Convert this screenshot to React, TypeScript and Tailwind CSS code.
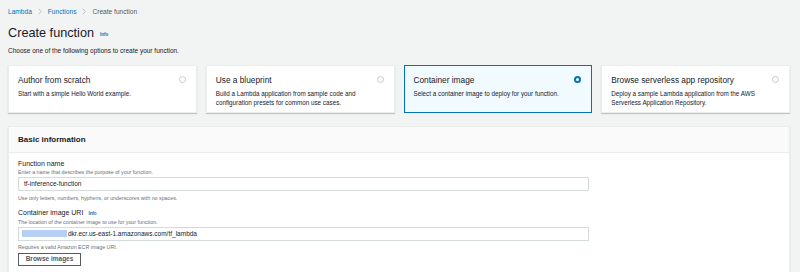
const font = { fontFamily: '"Liberation Sans", Arial, sans-serif' };

type Option = { title: string; desc: string; selected?: boolean };

const options: Option[] = [
  { title: "Author from scratch", desc: "Start with a simple Hello World example." },
  {
    title: "Use a blueprint",
    desc: "Build a Lambda application from sample code and configuration presets for common use cases.",
  },
  {
    title: "Container image",
    desc: "Select a container image to deploy for your function.",
    selected: true,
  },
  {
    title: "Browse serverless app repository",
    desc: "Deploy a sample Lambda application from the AWS Serverless Application Repository.",
  },
];

const Chevron = () => (
  <svg width="4" height="7" viewBox="0 0 4 7" className="shrink-0">
    <path d="M0.7 0.7 L3.3 3.5 L0.7 6.3" fill="none" stroke="#aab7b8" strokeWidth="0.8" />
  </svg>
);

const Radio = ({ on }: { on?: boolean }) =>
  on ? (
    <span className="mt-[1px] block h-[7px] w-[7px] shrink-0 rounded-full border-[2px] border-[#0073bb] bg-white" />
  ) : (
    <span className="mt-[1px] block h-[7px] w-[7px] shrink-0 rounded-full border border-[#c6cccc] bg-white" />
  );

const OptionCard = ({ o }: { o: Option }) => (
  <div
    className={
      o.selected
        ? "flex h-[48px] items-start justify-between border border-[#0073bb] bg-[#f1faff] pl-[9px] pr-[10px] pt-[9px]"
        : "flex h-[48px] items-start justify-between border border-[#eaeded] bg-white pl-[9px] pr-[10px] pt-[9px] shadow-[0_1px_1px_rgba(0,28,36,0.2)]"
    }
  >
    <div>
      <div className="text-[8.3px] leading-[10px] text-[#16191f]">{o.title}</div>
      <div className="mt-[4px] w-[150px] text-[6.3px] leading-[9px] text-[#16191f]">{o.desc}</div>
    </div>
    <Radio on={o.selected} />
  </div>
);

export default function App() {
  return (
    <div className="h-[272px] w-[800px] overflow-hidden bg-[#f2f3f3] pl-2 pr-[10px]" style={font}>
      {/* breadcrumb */}
      <nav className="flex h-[22px] items-center gap-[6px] pt-[1px] text-[6.6px] text-[#545b64]">
        <span className="text-[#0073bb]">Lambda</span>
        <Chevron />
        <span className="text-[#0073bb]">Functions</span>
        <Chevron />
        <span>Create function</span>
      </nav>

      <div className="flex h-[22px] items-center pt-[1px]">
        <h1 className="text-[12.7px] leading-none text-[#16191f]">Create function</h1>
        <span className="ml-[6px] mt-[3px] text-[4.5px] font-bold text-[#0073bb]">Info</span>
      </div>
      <p className="mt-[2px] text-[6.5px] leading-[10px] text-[#16191f]">
        Choose one of the following options to create your function.
      </p>

      <div className="mt-[9px] grid grid-cols-4 gap-[9px]">
        {options.map((o) => (
          <OptionCard key={o.title} o={o} />
        ))}
      </div>

      {/* basic information */}
      <section className="mt-[13px] border border-[#eaeded] bg-white shadow-[0_1px_1px_rgba(0,28,36,0.2)]">
        <div className="flex h-[26px] items-center border-b border-[#eaeded] bg-[#fafafa] pl-[9px]">
          <h2 className="text-[8px] font-bold text-[#16191f]">Basic information</h2>
        </div>
        <div className="pl-[9px] pt-[6px] pb-4">
          <label className="block text-[7px] leading-[9px] text-[#16191f]">Function name</label>
          <div className="text-[5.3px] leading-[8px] text-[#687078]">
            Enter a name that describes the purpose of your function.
          </div>
          <div className="mt-[1px] flex h-[14px] w-[571px] items-center border border-[#d5dbdb] pl-[5px] text-[6.5px] text-[#16191f]">
            tf-inference-function
          </div>
          <div className="mt-[3px] text-[5.3px] leading-[8px] text-[#687078]">
            Use only letters, numbers, hyphens, or underscores with no spaces.
          </div>

          <div className="mt-[6px] flex items-baseline">
            <label className="text-[7px] leading-[9px] text-[#16191f]">Container image URI</label>
            <span className="ml-[5px] text-[4.5px] font-bold text-[#0073bb]">Info</span>
          </div>
          <div className="text-[5.3px] leading-[8px] text-[#687078]">
            The location of the container image to use for your function.
          </div>
          <div className="mt-[1px] flex h-[14px] w-[571px] items-center border border-[#d5dbdb] pl-[3px] text-[6.5px] text-[#16191f]">
            <span className="mr-[1px] block h-[7px] w-[45px] bg-[#b6cff5] blur-[0.5px]" />
            dkr.ecr.us-east-1.amazonaws.com/tf_lambda
          </div>
          <div className="mt-[2px] text-[5.3px] leading-[8px] text-[#687078]">
            Requires a valid Amazon ECR image URI.
          </div>
          <button className="mt-[2px] flex h-[13px] w-[63px] items-center justify-center border border-[#545b64] bg-white text-[6.5px] font-bold text-[#545b64]">
            Browse images
          </button>
        </div>
      </section>
    </div>
  );
}
